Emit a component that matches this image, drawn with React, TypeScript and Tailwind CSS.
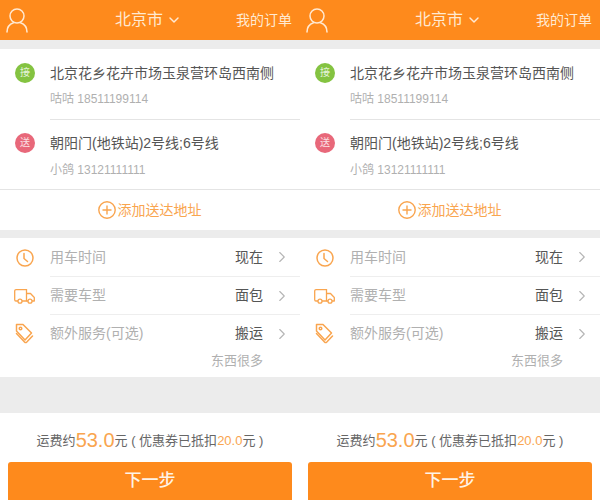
import React from "react";
import { ChevronDown, ChevronRight } from "lucide-react";

const FONT = "font-['Liberation_Sans','Noto_Sans_CJK_SC',sans-serif]";

const UserIcon = () => (
  <svg className="w-[22px] h-[26px]" viewBox="0 0 22 26" fill="none" stroke="#ffe9d2" strokeWidth="1.5">
    <circle cx="11" cy="9" r="7" />
    <path d="M1 25c0-5 3-8 6.500-9.200M21 25c0-5-3-8-6.500-9.200" strokeLinecap="round" />
  </svg>
);

const ClockIcon = () => (
  <svg className="w-[18px] h-[18px]" viewBox="0 0 18 18" fill="none" stroke="#f9a54f" strokeWidth="1.5">
    <circle cx="9" cy="9" r="8" />
    <path d="M8 4.500v5l3.500 3" strokeLinecap="round" strokeLinejoin="round" />
  </svg>
);

const TruckIcon = () => (
  <svg className="w-[21px] h-[15px]" viewBox="0 0 21 15" fill="none" stroke="#f9a54f" strokeWidth="1.3">
    <path d="M4 12H2a1.300 1.300 0 0 1-1.300-1.300V2A1.300 1.300 0 0 1 2 .7h10.500V12H8" />
    <path d="M12.500 4.500h4l3.800 4v3.500H18M12.500 12h1.500" strokeLinejoin="round" />
    <circle cx="6" cy="12.200" r="2" />
    <circle cx="16" cy="12.200" r="2" />
  </svg>
);

const TagIcon = () => (
  <svg className="w-[19px] h-[21px]" viewBox="0 0 19 21" fill="none" stroke="#f9a54f" strokeWidth="1.5">
    <path d="M1.500 1.500h6.500l8.500 8.500-6.500 7L1.500 8z" strokeLinejoin="round" />
    <path d="M1.500 10.500l8 8.500c.8.800 1.500.8 2.300 0l5.700-6" strokeLinecap="round" />
    <circle cx="5.500" cy="5.500" r="1.300" />
  </svg>
);

const PlusCircle = () => (
  <svg className="w-[18px] h-[18px] shrink-0" viewBox="0 0 18 18" fill="none" stroke="#f9a54f" strokeWidth="1.4">
    <circle cx="9" cy="9" r="8.200" />
    <path d="M4.500 9h9M9 4.500v9" />
  </svg>
);

const AddressRow = ({ badge, color, title, sub, h, top, gap }: { badge: string; color: string; title: string; sub: string; h: string; top: string; gap: string }) => (
  <div className={`flex ${h}`}>
    <div className={`w-[50px] shrink-0 pl-[15px] ${top}`}>
      <span className={`flex w-5 h-5 items-center justify-center rounded-full text-[10px] leading-none text-white/80 ${color}`}>
        {badge}
      </span>
    </div>
    <div className={`flex-1 ${top}`}>
      <div className="text-[14px] leading-[20px] text-[#555555] whitespace-nowrap">{title}</div>
      <div className={`text-[12px] leading-[14px] text-[#b0b0b0] ${gap}`}>{sub}</div>
    </div>
  </div>
);

const OptionRow = ({ icon, label, value, border, h }: { icon: React.ReactNode; label: string; value: string; border?: boolean; h: string }) => (
  <div className={`flex ${h}`}>
    <div className="w-[50px] shrink-0 flex items-center justify-center pr-[1px]">{icon}</div>
    <div className={`flex-1 flex items-center ${border ? "border-b border-[#eeeeee]" : ""}`}>
      <span className="flex-1 text-[14px] text-[#b0b0b0]">{label}</span>
      <span className="text-[14px] text-[#555555]">{value}</span>
      <ChevronRight className="w-[18px] h-[18px] ml-[10px] mr-[9px] text-[#b5b5b5]" strokeWidth={1.5} />
    </div>
  </div>
);

const Panel = () => (
  <div className="w-[300px] h-[500px] flex flex-col overflow-hidden bg-[#ececec]">
    <div className="h-[40px] shrink-0 bg-[#fe8a1c] flex items-center pl-[6px] pr-[8px]">
      <UserIcon />
      <div className="flex flex-1 items-center justify-center pl-[33px] text-[16px] text-[#ffe9d2]">
        北京市
        <ChevronDown className="w-[16px] h-[16px] ml-[3px]" strokeWidth={2.2} />
      </div>
      <span className="text-[14px] text-[#ffe9d2]">我的订单</span>
    </div>

    <div className="mt-[9px] bg-white">
      <AddressRow badge="接" color="bg-[#84c341]" title="北京花乡花卉市场玉泉营环岛西南侧" sub="咕咕 18511199114" h="h-[70px]" top="pt-[14px]" gap="mt-[9px]" />
      <div className="ml-[50px] border-t border-[#e4e4e4]" />
      <AddressRow badge="送" color="bg-[#e8687a]" title="朝阳门(地铁站)2号线;6号线" sub="小鸽 13121111111" h="h-[69px]" top="pt-[13px]" gap="mt-[10px]" />
      <div className="flex h-[41px] items-center justify-center border-t border-[#e4e4e4] pr-[1px] text-[14px] text-[#f9a54f]">
        <PlusCircle />
        <span className="ml-[2px]">添加送达地址</span>
      </div>
    </div>

    <div className="mt-[8px] h-[139px] shrink-0 bg-white">
      <OptionRow icon={<ClockIcon />} label="用车时间" value="现在" border h="h-[39px]" />
      <OptionRow icon={<TruckIcon />} label="需要车型" value="面包" border h="h-[38px]" />
      <OptionRow icon={<TagIcon />} label="额外服务(可选)" value="搬运" h="h-[37px]" />
      <div className="pr-[37px] text-right text-[13px] leading-[18px] text-[#b0b0b0]">东西很多</div>
    </div>

    <div className="mt-[36px] flex-1 bg-white flex flex-col">
      <div className="h-[49px] flex items-end justify-center pb-[12px] text-[13px] leading-[18px] text-[#666666] whitespace-nowrap">
        运费约<span className="text-[20px] leading-[20px] text-[#f9a54f]">53.0</span>元 ( 优惠券已抵扣<span className="text-[13px] text-[#f9a54f]">20.0</span>元 )
      </div>
      <div className="mx-2 flex-1 rounded-t-[3px] bg-[#fe8a1c] flex items-center justify-center text-[17px] font-medium text-[#fff3e6]">
        下一步
      </div>
    </div>
  </div>
);

export default function App() {
  return (
    <div className={`flex w-[600px] h-[500px] overflow-hidden ${FONT}`}>
      <Panel />
      <Panel />
    </div>
  );
}
